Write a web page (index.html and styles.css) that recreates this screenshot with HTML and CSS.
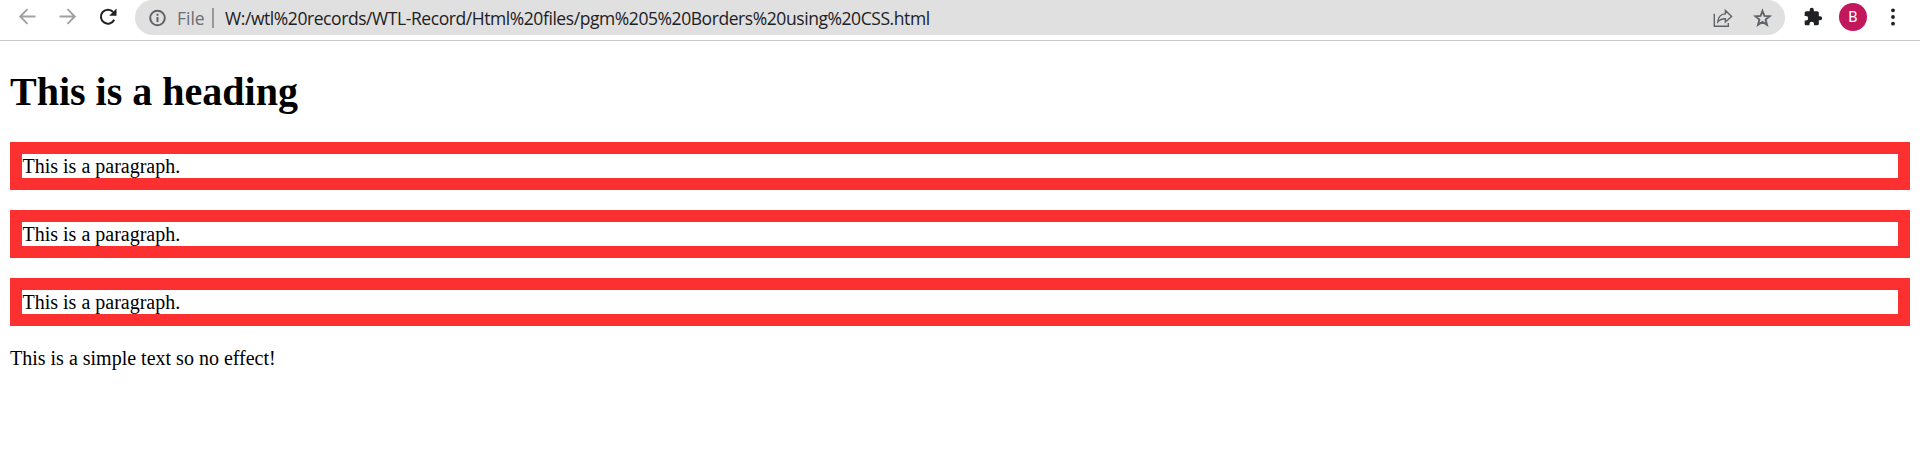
FILE: index.html
```html
<!DOCTYPE html>
<html lang="en">
<head>
<meta charset="utf-8">
<title>Borders using CSS</title>
<link rel="stylesheet" href="styles.css">
</head>
<body>
<header class="toolbar">
  <nav class="nav">
    <svg class="icon dim" viewBox="0 0 20 20"><path d="M17.500 9.500H2.500M9.500 2.200L2.200 9.500l7.300 7.300"/></svg>
    <svg class="icon dim" viewBox="0 0 20 20"><path d="M1.500 9.500h15M9.500 2.200l7.300 7.300-7.300 7.300"/></svg>
    <svg class="icon dark" viewBox="0 0 20 20"><path d="M16.200 12.800A7 7 0 1 1 15.200 5"/><path class="solid" d="M18.500 1.500v7.300h-7.300z"/></svg>
  </nav>
  <div class="address">
    <svg class="icon info" viewBox="0 0 20 20"><circle cx="10.500" cy="10" r="7.300"/><path d="M10.500 9v5M10.500 5.700v2"/></svg>
    <span class="scheme">File</span>
    <span class="divider"></span>
    <span class="url">W:/wtl%20records/WTL-Record/Html%20files/pgm%205%20Borders%20using%20CSS.html</span>
    <svg class="icon share" viewBox="0 0 20 20"><path d="M1.300 5.700v12.500h14V15"/><path d="M4.800 13.800c.4-4.800 2.900-7.600 7.600-7.900V2.400l6.200 6-6.200 5.500v-3.200c-3.400 0-5.700.9-7.600 3.100z"/></svg>
    <svg class="icon star" viewBox="0 0 20 20"><path d="M9.500 3l1.900 4.900 5.300.3-4.100 3.400 1.400 5.200-4.500-2.900-4.500 2.900 1.400-5.200-4.100-3.400 5.300-.3z"/></svg>
  </div>
  <svg class="puzzle" viewBox="0 0 24 24"><path d="M20.500 11H19V7a2 2 0 0 0-2-2h-4V3.500a2.500 2.500 0 0 0-5 0V5H4a2 2 0 0 0-2 2v3.800h1.500a2.700 2.700 0 0 1 0 5.400H2V20c0 1.100.9 2 2 2h3.800v-1.500a2.700 2.700 0 0 1 5.400 0V22H17a2 2 0 0 0 2-2v-4h1.500a2.500 2.500 0 0 0 0-5z"/></svg>
  <span class="avatar">B</span>
  <svg class="menu" viewBox="0 0 4 18"><circle cx="2" cy="2.300" r="1.900"/><circle cx="2" cy="9" r="1.900"/><circle cx="2" cy="15.700" r="1.900"/></svg>
</header>
<main class="page">
  <h1 class="heading">This is a heading</h1>
  <p class="boxed">This is a paragraph.</p>
  <p class="boxed">This is a paragraph.</p>
  <p class="boxed">This is a paragraph.</p>
  <div class="plain">This is a simple text so no effect!</div>
</main>
</body>
</html>
```
FILE: styles.css
```css
body {
  margin: 0;
  background: #fff;
  color: #000;
}

.toolbar {
  display: flex;
  align-items: flex-start;
  box-sizing: border-box;
  height: 41px;
  border-bottom: 1px solid #c8c8c8;
  font-family: "Open Sans", "Noto Sans", sans-serif;
  font-size: 17.5px;
}

.nav {
  display: flex;
  gap: 20px;
  width: 117px;
  padding: 7px 0 0 18px;
}

.icon {
  flex: none;
  width: 20px;
  height: 20px;
  fill: none;
  stroke: #5f6368;
  stroke-width: 1.9;
}

.dim { stroke: #a0a1a3; }
.dark { stroke: #202124; stroke-width: 2; }
.solid { fill: #202124; stroke: none; }
.info { stroke-width: 2; }
.share { stroke-width: 1.4; }

.address {
  display: flex;
  align-items: center;
  box-sizing: border-box;
  width: 1650px;
  height: 35px;
  padding: 0 12px;
  border-radius: 17.5px;
  background: #e0e0e0;
  white-space: nowrap;
}

.scheme {
  width: 35px;
  margin-left: 10px;
  color: #6b6e73;
}

.divider {
  width: 2px;
  height: 20px;
  background: #999;
}

.url {
  margin: 0 auto 0 11px;
  color: #202124;
  letter-spacing: -0.43px;
}

.star { margin-left: 20px; }

.puzzle {
  width: 20px;
  height: 20px;
  margin: 7px 0 0 18px;
  fill: #202124;
}

.avatar {
  width: 28px;
  height: 28px;
  margin: 3px 0 0 16px;
  border-radius: 50%;
  background: #c2185b;
  color: #fff;
  font: 15px/28px Roboto, sans-serif;
  text-align: center;
}

.menu {
  width: 4px;
  height: 18px;
  margin: 8px 0 0 23.5px;
  fill: #202124;
}

.page {
  padding: 28px 10px 0;
  font: 20px/24px "Liberation Serif", "Times New Roman", serif;
}

.heading {
  margin: 0 0 27px;
  font-size: 40px;
  line-height: 46px;
}

.boxed {
  margin: 0 0 20px;
  border: 12px solid #fc3030;
  text-indent: 0.5px;
}
```
